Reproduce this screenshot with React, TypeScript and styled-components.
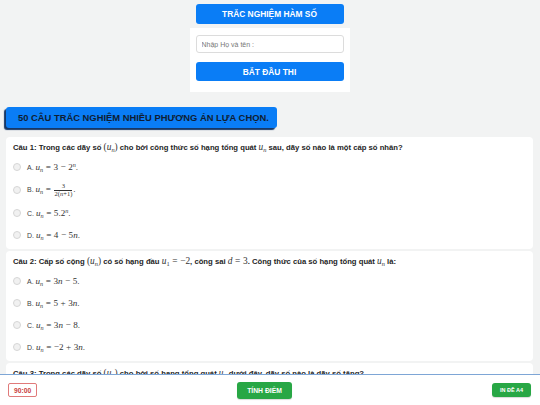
import React from "react";
import styled, { createGlobalStyle } from "styled-components";

const GlobalStyle = createGlobalStyle`
  * { box-sizing: border-box; }
  body {
    margin: 0;
    background: #f2f3f3;
    font-family: "Liberation Sans", Arial, sans-serif;
    color: #222;
  }
`;

const Page = styled.div`
  padding: 4px 7px 44px 6px;
`;

const StartPanel = styled.div`
  width: 160px;
  margin: 0 auto;
  display: flex;
  flex-direction: column;
  align-items: stretch;
`;

const BlueButton = styled.div`
  height: ${(p: { $h?: number }) => p.$h ?? 20}px;
  background: #0a7df6;
  border-radius: 3px;
  color: #fff;
  font-weight: bold;
  font-size: 8.4px;
  display: flex;
  align-items: center;
  justify-content: center;
`;

const PanelTitle = styled(BlueButton)`
  margin: 0 6px;
`;

const PanelCard = styled.div`
  margin-top: 4px;
  background: #fff;
  padding: 7px 6px 11px;
  display: flex;
  flex-direction: column;
  gap: 9px;
`;

const NameInput = styled.input`
  height: 18px;
  border: 1px solid #dcdcdc;
  border-radius: 3px;
  padding: 0 5px;
  font-family: "Liberation Sans", Arial, sans-serif;
  font-size: 7px;
  outline: none;
  &::placeholder {
    color: #777;
  }
`;

const Banner = styled.div`
  margin-top: 15px;
  width: 271px;
  height: 21px;
  background: #0a7df6;
  border-radius: 3px;
  box-shadow: -2px 2px 1px #163766;
  color: #0f1d33;
  font-weight: bold;
  font-size: 9.4px;
  display: flex;
  align-items: center;
  padding-left: 12px;
`;

const QuestionList = styled.div`
  margin-top: 9px;
  display: flex;
  flex-direction: column;
  gap: 2px;
`;

const QuestionCard = styled.div`
  background: #fff;
  border-radius: 4px;
  padding: 5px 8px 3px 7px;
`;

const QuestionText = styled.div`
  font-weight: bold;
  font-size: 7.7px;
  line-height: 10px;
  color: #1e1e1e;
  margin-bottom: 3px;
  white-space: nowrap;
`;

const OptionRow = styled.label<{ $tall?: boolean }>`
  height: ${(p) => (p.$tall ? 24 : 22)}px;
  display: flex;
  align-items: center;
  gap: 6px;
  font-size: 7px;
  color: #444;
`;

const Radio = styled.span`
  width: 8px;
  height: 8px;
  border-radius: 50%;
  border: 1px solid #d6d6d6;
  background: #f1f1f1;
  flex-shrink: 0;
`;

const M = styled.span<{ $scale?: number }>`
  font-family: "Liberation Serif", "Times New Roman", serif;
  font-weight: normal;
  font-size: ${(p) => p.$scale ?? 1.22}em;
  color: #333;
  white-space: nowrap;
`;

const V = styled.i`
  font-style: italic;
`;

const Sub = styled.sub`
  font-size: 0.68em;
  vertical-align: -0.25em;
  line-height: 0;
`;

const Sup = styled.sup`
  font-size: 0.68em;
  vertical-align: 0.5em;
  line-height: 0;
`;

const Op = styled.span`
  margin: 0 0.28em;
`;

const Frac = styled.span`
  display: inline-flex;
  flex-direction: column;
  align-items: center;
  vertical-align: middle;
  font-size: 0.72em;
  line-height: 1.05;
  margin: 0 1px;
`;

const FracTop = styled.span`
  border-bottom: 0.6px solid #333;
  padding: 0 1px;
  width: 100%;
  text-align: center;
`;

const Footer = styled.div`
  position: fixed;
  left: 0;
  right: 0;
  bottom: 0;
  height: 31px;
  background: #fff;
  border-top: 1px solid #7ea6d6;
  display: flex;
  align-items: center;
  justify-content: space-between;
  padding: 0 9px 0 8px;
`;

const Timer = styled.div`
  height: 14px;
  padding: 0 5px;
  border: 1px solid #e07a7a;
  border-radius: 2px;
  color: #c94040;
  font-weight: bold;
  font-size: 6.7px;
  display: flex;
  align-items: center;
`;

const GreenButton = styled.div<{ $size: number; $h: number; $pad: number }>`
  height: ${(p) => p.$h}px;
  padding: 0 ${(p) => p.$pad}px;
  background: #28a745;
  border-radius: 3px;
  color: #fff;
  font-weight: bold;
  font-size: ${(p) => p.$size}px;
  display: flex;
  align-items: center;
  box-shadow: 0 1px 1px rgba(0, 0, 0, 0.15);
`;

const un = (
  <>
    <V>u</V>
    <Sub>
      <V>n</V>
    </Sub>
  </>
);

const Eq = () => <Op>=</Op>;
const Minus = () => <Op>−</Op>;
const Plus = () => <Op>+</Op>;

type Option = { body: React.ReactNode; tall?: boolean };

type Question = {
  title: React.ReactNode;
  options: Option[];
};

const questions: Question[] = [
  {
    title: (
      <>
        Câu 1: Trong các dãy số <M>({un})</M> cho bởi công thức số hạng tổng quát <M>{un}</M> sau, dãy số
        nào là một cấp số nhân?
      </>
    ),
    options: [
      {
        body: (
          <>
            {un}
            <Eq />3<Minus />2<Sup><V>n</V></Sup>.
          </>
        ),
      },
      {
        tall: true,
        body: (
          <>
            {un}
            <Eq />
            <Frac>
              <FracTop>3</FracTop>
              <span>
                2(<V>n</V>+1)
              </span>
            </Frac>
            .
          </>
        ),
      },
      {
        body: (
          <>
            {un}
            <Eq />5.2<Sup><V>n</V></Sup>.
          </>
        ),
      },
      {
        body: (
          <>
            {un}
            <Eq />4<Minus />5<V>n</V>.
          </>
        ),
      },
    ],
  },
  {
    title: (
      <>
        Câu 2: Cấp số cộng <M>({un})</M> có số hạng đầu{" "}
        <M>
          <V>u</V>
          <Sub>1</Sub>
          <Eq />−2
        </M>
        , công sai{" "}
        <M>
          <V>d</V>
          <Eq />3
        </M>
        . Công thức của số hạng tổng quát <M>{un}</M> là:
      </>
    ),
    options: [
      {
        body: (
          <>
            {un}
            <Eq />3<V>n</V>
            <Minus />5.
          </>
        ),
      },
      {
        body: (
          <>
            {un}
            <Eq />5<Plus />3<V>n</V>.
          </>
        ),
      },
      {
        body: (
          <>
            {un}
            <Eq />3<V>n</V>
            <Minus />8.
          </>
        ),
      },
      {
        body: (
          <>
            {un}
            <Eq />−2<Plus />3<V>n</V>.
          </>
        ),
      },
    ],
  },
  {
    title: (
      <>
        Câu 3: Trong các dãy số <M>({un})</M> cho bởi số hạng tổng quát <M>{un}</M> dưới đây, dãy số nào là
        dãy số tăng?
      </>
    ),
    options: [
      {
        body: (
          <>
            {un}
            <Eq />2<Sup><V>n</V></Sup>.
          </>
        ),
      },
      {
        tall: true,
        body: (
          <>
            {un}
            <Eq />
            <Frac>
              <FracTop>1</FracTop>
              <V>n</V>
            </Frac>
            .
          </>
        ),
      },
      {
        body: (
          <>
            {un}
            <Eq />1<Minus />
            <V>n</V>.
          </>
        ),
      },
      {
        tall: true,
        body: (
          <>
            {un}
            <Eq />
            <Frac>
              <FracTop>1</FracTop>
              <span>
                2<Sup><V>n</V></Sup>
              </span>
            </Frac>
            .
          </>
        ),
      },
    ],
  },
];

const letters = ["A", "B", "C", "D"];

const App = () => {
  return (
    <>
      <GlobalStyle />
      <Page>
        <StartPanel>
          <PanelTitle>TRẮC NGHIỆM HÀM SỐ</PanelTitle>
          <PanelCard>
            <NameInput placeholder="Nhập Họ và tên :" />
            <BlueButton $h={19}>BẮT ĐẦU THI</BlueButton>
          </PanelCard>
        </StartPanel>

        <Banner>50 CÂU TRẮC NGHIỆM NHIỀU PHƯƠNG ÁN LỰA CHỌN.</Banner>

        <QuestionList>
          {questions.map((q, i) => (
            <QuestionCard key={i}>
              <QuestionText>{q.title}</QuestionText>
              {q.options.map((opt, j) => (
                <OptionRow key={j} $tall={opt.tall}>
                  <Radio />
                  <span>
                    {letters[j]}. <M $scale={1.3}>{opt.body}</M>
                  </span>
                </OptionRow>
              ))}
            </QuestionCard>
          ))}
        </QuestionList>
      </Page>

      <Footer>
        <Timer>90:00</Timer>
        <GreenButton $size={6.8} $h={17} $pad={10}>
          TÍNH ĐIỂM
        </GreenButton>
        <GreenButton $size={5.5} $h={14} $pad={8}>
          IN ĐỀ A4
        </GreenButton>
      </Footer>
    </>
  );
};

export default App;
